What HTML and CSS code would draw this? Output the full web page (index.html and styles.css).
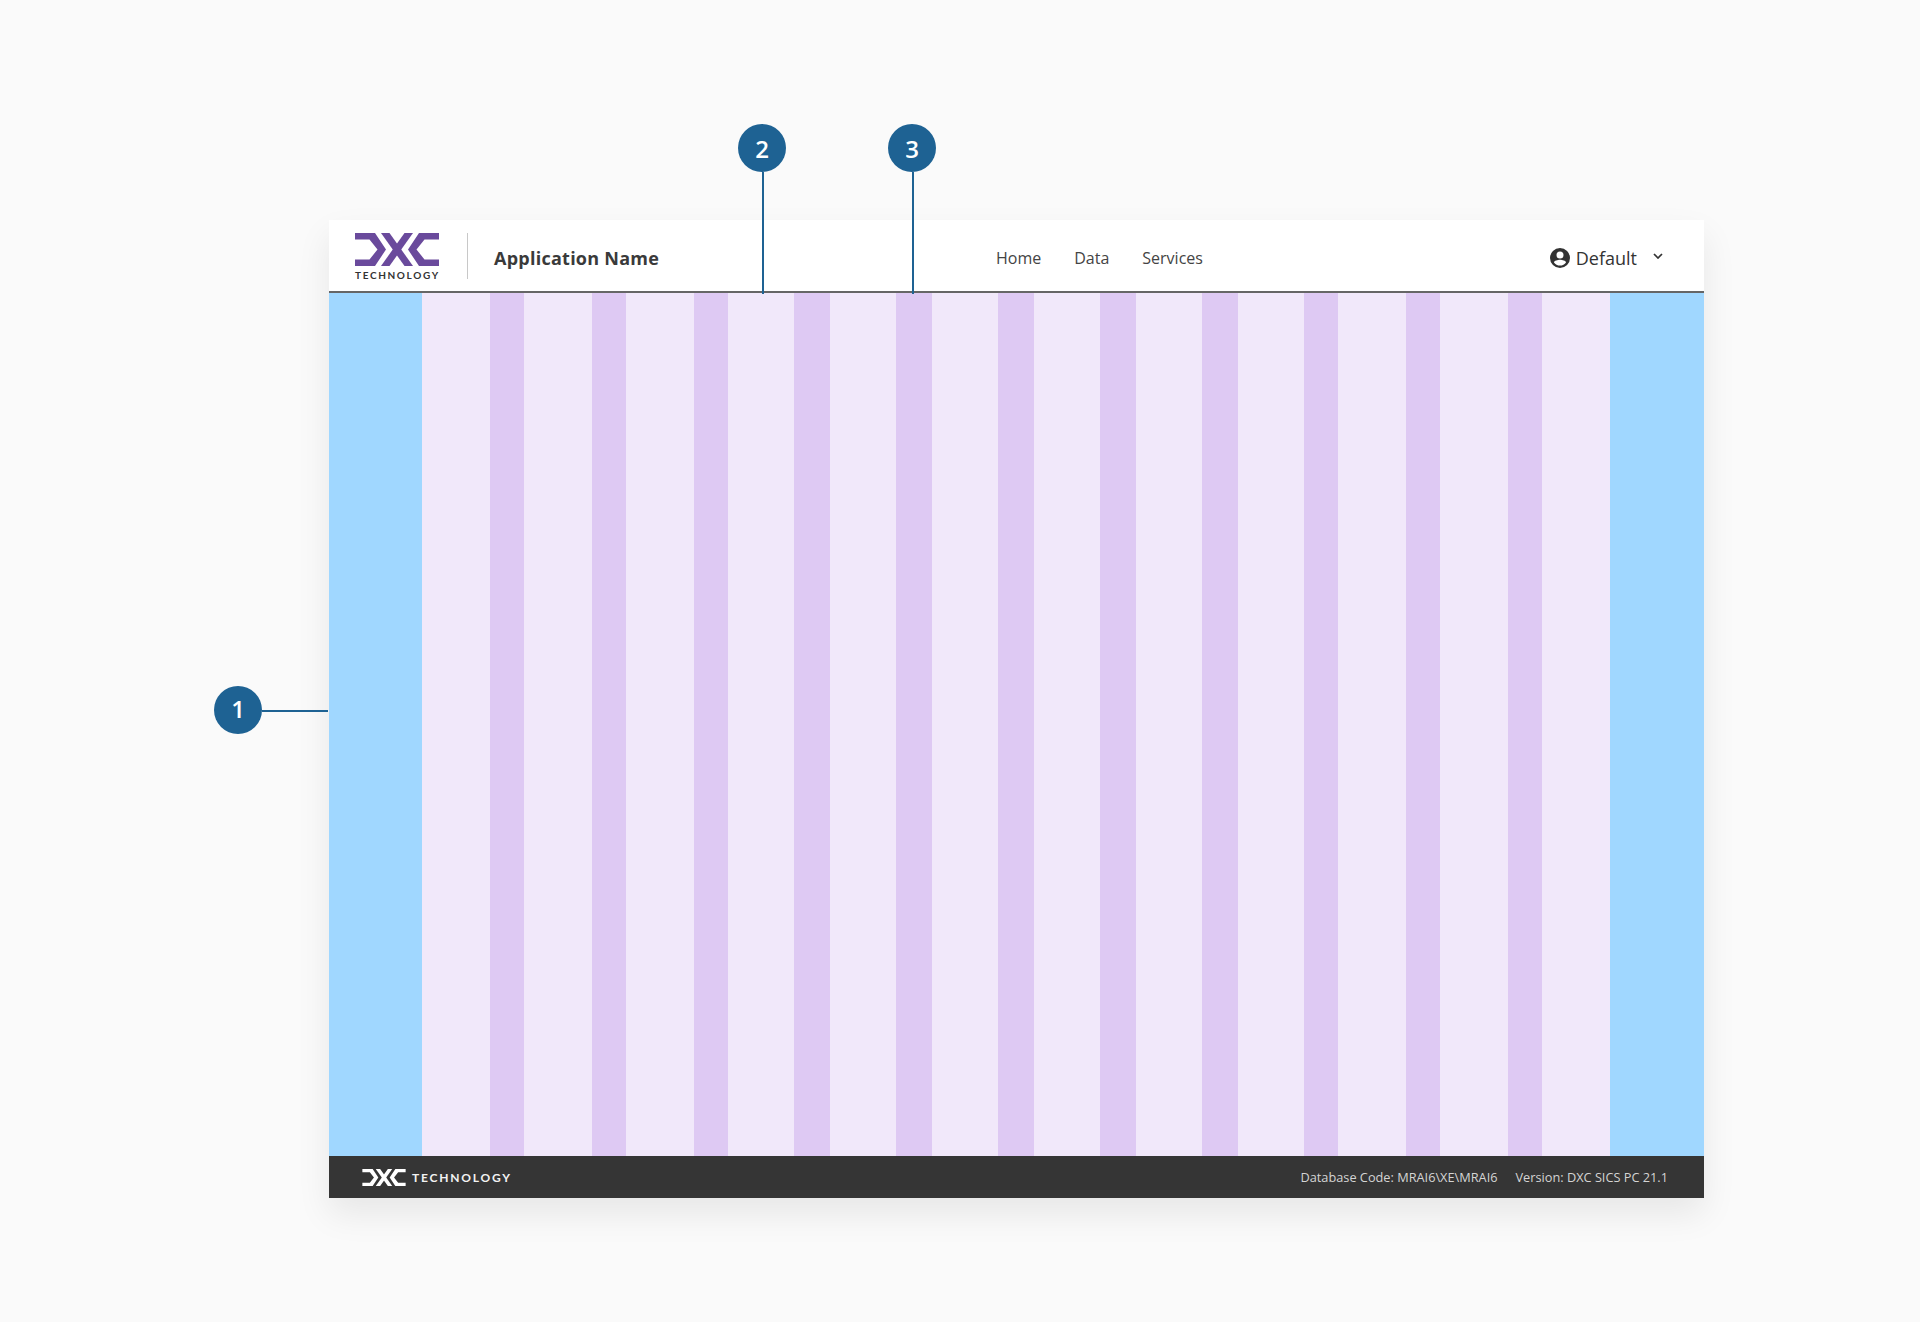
FILE: index.html
```html
<!DOCTYPE html>
<html lang="en">
<head>
<meta charset="utf-8">
<title>Application Name</title>
<link rel="stylesheet" href="styles.css">
</head>
<body>
<svg class="defs" aria-hidden="true">
  <symbol id="dxc" viewBox="0 0 84 33">
    <path d="M0 0H20L31 16.500L20 33H0V26.500H14.500L22.500 16.500L14.500 6.500H0Z"/>
    <path d="M26 0H34.500L58 33H49.500Z"/>
    <path d="M49.500 0H58L34.500 33H26Z"/>
    <path d="M84 0H64L53 16.500L64 33H84V26.500H69.500L61.500 16.500L69.500 6.500H84Z"/>
  </symbol>
</svg>
<main class="stage">
  <div class="frame">
    <header class="header">
      <div class="logo">
        <svg class="logo-mark" aria-hidden="true"><use href="#dxc"/></svg>
        <span class="logo-text">TECHNOLOGY</span>
      </div>
      <div class="app-name">Application Name</div>
      <nav class="nav">
        <a>Home</a>
        <a>Data</a>
        <a>Services</a>
      </nav>
      <div class="user">
        <svg class="user-icon" viewBox="0 0 20 20" aria-hidden="true">
          <path d="M10 0a10 10 0 1 0 0 20a10 10 0 0 0 0-20ZM10 3.600a3.500 3.500 0 1 1 0 7a3.500 3.500 0 0 1 0-7ZM10 17.600c-2.500 0-4.700-1.200-6-3.100c.1-1.700 3.800-2.700 6-2.700s5.900 1 6 2.700c-1.300 1.900-3.500 3.100-6 3.100Z"/>
        </svg>
        <span>Default</span>
        <svg class="chevron" viewBox="0 0 10 6" aria-hidden="true"><path d="M1 1l4 4l4-4"/></svg>
      </div>
    </header>
    <div class="grid">
      <div class="margin"></div>
      <div class="col"></div><div class="gut"></div>
      <div class="col"></div><div class="gut"></div>
      <div class="col"></div><div class="gut"></div>
      <div class="col"></div><div class="gut"></div>
      <div class="col"></div><div class="gut"></div>
      <div class="col"></div><div class="gut"></div>
      <div class="col"></div><div class="gut"></div>
      <div class="col"></div><div class="gut"></div>
      <div class="col"></div><div class="gut"></div>
      <div class="col"></div><div class="gut"></div>
      <div class="col"></div><div class="gut"></div>
      <div class="col"></div>
      <div class="margin"></div>
    </div>
    <footer class="footer">
      <div class="foot-logo">
        <svg class="foot-mark" aria-hidden="true"><use href="#dxc"/></svg>
        <span class="foot-text">TECHNOLOGY</span>
      </div>
      <div class="foot-info">
        <span>Database Code: MRAI6\XE\MRAI6</span>
        <span>Version: DXC SICS PC 21.1</span>
      </div>
    </footer>
  </div>
  <div class="callout callout-1"><span class="dot">1</span><span class="leader-h"></span></div>
  <div class="callout callout-2"><span class="dot">2</span><span class="leader-v"></span></div>
  <div class="callout callout-3"><span class="dot">3</span><span class="leader-v"></span></div>
</main>
</body>
</html>
```
FILE: styles.css
```css
* { box-sizing: border-box; }
html, body { margin: 0; padding: 0; }
body {
  background: #fafafa;
  font-family: "Open Sans", "Noto Sans", sans-serif;
  color: #333;
  height: 1322px;
  overflow: hidden;
}
.defs { display: none; }
.stage {
  position: relative;
  height: 1322px;
  padding: 220px 216px 0 329px;
}
.frame {
  width: 1375px;
  height: 978px;
  display: flex;
  flex-direction: column;
  box-shadow: 0 16px 32px rgba(0, 0, 0, .08);
}
.header {
  height: 73px;
  flex: none;
  background: #fff;
  border-bottom: 2px solid #666;
  display: flex;
  align-items: flex-start;
}
.logo {
  width: 113px;
  height: 46px;
  margin: 13px 0 0 26px;
  flex: none;
  display: flex;
  flex-direction: column;
  border-right: 1px solid #c8c8c8;
}
.logo-mark { width: 84px; height: 33px; display: block; flex: none; fill: #6a4a9c; }
.logo-text {
  font-family: "Lato", sans-serif;
  font-size: 10px;
  font-weight: 700;
  line-height: 12px;
  letter-spacing: 1.650px;
  color: #333;
  margin-top: 3px;
  white-space: nowrap;
}
.app-name {
  margin: 26px 0 0 26px;
  width: 300px;
  font-size: 18px;
  font-weight: 700;
  line-height: 24px;
  letter-spacing: .25px;
  color: #3a3a3a;
}
.nav {
  display: flex;
  gap: 33px;
  margin: 27px 0 0 202px;
  font-size: 16px;
  line-height: 22px;
  color: #444;
}
.user {
  display: flex;
  align-items: center;
  margin: 27px 0 0 auto;
  padding-right: 41px;
  font-size: 18px;
  line-height: 22px;
  color: #333;
}
.user-icon { width: 20px; height: 20px; fill: #333; margin-right: 6px; }
.chevron { width: 10px; height: 6px; margin-left: 16px; margin-top: -4px; fill: none; stroke: #333; stroke-width: 1.700; }
.grid {
  flex: 1;
  display: grid;
  grid-template-columns: 93px 68px 34px 68px 34px 68px 34px 66px 36px 66px 36px 66px 36px 66px 36px 66px 36px 66px 34px 68px 34px 68px 34px 68px 94px;
}
.margin { background: #a0d7ff; }
.col { background: #f1e8fa; }
.gut { background: #dec9f3; }
.footer {
  height: 42px;
  flex: none;
  background: #353535;
  display: flex;
  align-items: center;
  justify-content: space-between;
  padding: 0 36px 0 33px;
}
.foot-logo { display: flex; align-items: center; gap: 6px; }
.foot-mark { width: 44px; height: 17px; display: block; fill: #fff; }
.foot-text {
  font-family: "Lato", sans-serif;
  font-size: 12px;
  font-weight: 700;
  letter-spacing: 1.800px;
  color: #f2f2f2;
}
.foot-info {
  display: flex;
  gap: 18px;
  font-size: 12.750px;
  line-height: 18px;
  color: #d4d4d4;
}
.callout { position: absolute; }
.dot {
  display: flex;
  align-items: center;
  justify-content: center;
  width: 48px;
  height: 48px;
  border-radius: 50%;
  background: #1e6293;
  color: #fff;
  font-size: 24px;
  font-weight: 600;
  line-height: 1;
}
.callout-1 { left: 214px; top: 686px; display: flex; align-items: center; }
.callout-1 .dot { padding-bottom: 3px; }
.leader-h { display: block; width: 66px; height: 2px; margin-top: 2px; background: #1e6293; }
.callout-2 { left: 738px; top: 124px; }
.callout-3 { left: 888px; top: 124px; }
.callout-2 .dot, .callout-3 .dot { padding-top: 2px; }
.leader-v { display: block; width: 2px; height: 122px; margin-left: 24px; background: #1e6293; }
```
